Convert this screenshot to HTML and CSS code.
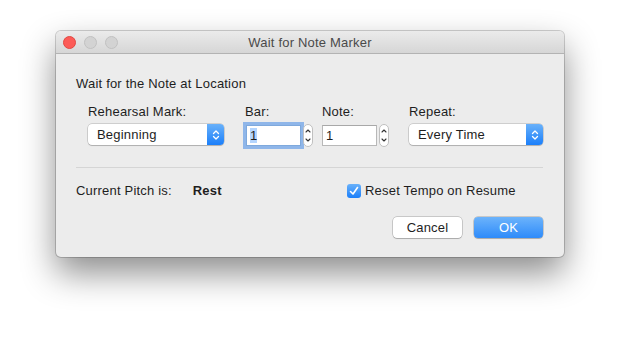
FILE: index.html
```html
<!DOCTYPE html>
<html lang="en">
<head>
    <meta charset="UTF-8">
    <meta name="viewport" content="width=device-width, initial-scale=1.0">
    <title>Wait for Note Marker</title>
    <link rel="stylesheet" href="styles.css">
</head>
<body>
    <div class="window">
        <div class="titlebar">
            <div class="lights">
                <span class="light close"></span>
                <span class="light"></span>
                <span class="light"></span>
            </div>
            <div class="title">Wait for Note Marker</div>
        </div>

        <div class="content">
            <div class="heading">Wait for the Note at Location</div>

            <div class="fields">
                <div class="field col-mark">
                    <label>Rehearsal Mark:</label>
                    <div class="popup popup-mark">
                        <span class="popup-text">Beginning</span>
                        <span class="popup-arrows">
                            <svg width="8" height="12" viewBox="0 0 8 12"><path d="M1.5 4.5 L4 2 L6.5 4.5 M1.5 7.5 L4 10 L6.5 7.5" fill="none" stroke="#fff" stroke-width="1.3" stroke-linecap="round" stroke-linejoin="round"/></svg>
                        </span>
                    </div>
                </div>

                <div class="field col-bar">
                    <label>Bar:</label>
                    <div class="number-row">
                        <div class="textbox focused"><span class="selected">1</span></div>
                        <div class="stepper">
                            <svg width="8" height="21" viewBox="0 0 8 21"><path d="M2 7 L4 5 L6 7 M2 14 L4 16 L6 14" fill="none" stroke="#333" stroke-width="1.1" stroke-linecap="round" stroke-linejoin="round"/></svg>
                        </div>
                    </div>
                </div>

                <div class="field col-note">
                    <label>Note:</label>
                    <div class="number-row">
                        <div class="textbox">1</div>
                        <div class="stepper">
                            <svg width="8" height="21" viewBox="0 0 8 21"><path d="M2 7 L4 5 L6 7 M2 14 L4 16 L6 14" fill="none" stroke="#333" stroke-width="1.1" stroke-linecap="round" stroke-linejoin="round"/></svg>
                        </div>
                    </div>
                </div>

                <div class="field col-repeat">
                    <label>Repeat:</label>
                    <div class="popup popup-repeat">
                        <span class="popup-text">Every Time</span>
                        <span class="popup-arrows">
                            <svg width="8" height="12" viewBox="0 0 8 12"><path d="M1.5 4.5 L4 2 L6.5 4.5 M1.5 7.5 L4 10 L6.5 7.5" fill="none" stroke="#fff" stroke-width="1.3" stroke-linecap="round" stroke-linejoin="round"/></svg>
                        </span>
                    </div>
                </div>
            </div>

            <div class="separator"></div>

            <div class="status-row">
                <div class="pitch">
                    <span class="pitch-label">Current Pitch is:</span>
                    <span class="pitch-value">Rest</span>
                </div>
                <div class="check">
                    <span class="checkbox">
                        <svg width="14" height="14" viewBox="0 0 14 14"><path d="M3.5 7.5 L6 10 L10.5 3.5" fill="none" stroke="#fff" stroke-width="1.6" stroke-linecap="round" stroke-linejoin="round"/></svg>
                    </span>
                    <span>Reset Tempo on Resume</span>
                </div>
            </div>

            <div class="buttons">
                <button class="btn">Cancel</button>
                <button class="btn btn-default">OK</button>
            </div>
        </div>
    </div>
</body>
</html>
```

FILE: styles.css
```css
html, body {
    height: 100%;
}

body {
    margin: 0;
    padding: 0;
    overflow: hidden;
    background: #ffffff;
    font-family: 'Liberation Sans', Arial, sans-serif;
    font-size: 13px;
    letter-spacing: 0.2px;
    color: #1e1e1e;
}

.window {
    margin: 31px 0 0 56px;
    width: 508px;
    height: 226px;
    border-radius: 5px;
    overflow: hidden;
    background: #ececec;
    box-shadow: 0 0 0 1px rgba(0, 0, 0, 0.18), 0 16px 34px rgba(0, 0, 0, 0.45);
}

.titlebar {
    height: 22px;
    display: flex;
    align-items: center;
    background: linear-gradient(#ebebeb, #d6d6d6);
    border-bottom: 1px solid #b3b3b3;
    position: relative;
}

.lights {
    display: flex;
    gap: 8px;
    padding-left: 7px;
}

.light {
    width: 11px;
    height: 11px;
    border-radius: 50%;
    background: #d3d3d3;
    border: 0.5px solid #c1c1c1;
}

.light.close {
    background: #fc5b57;
    border-color: #e14942;
}

.title {
    position: absolute;
    left: 0;
    right: 0;
    text-align: center;
    color: #4a4a4a;
    pointer-events: none;
}

.content {
    padding: 22px 21px 0 20px;
}

.heading {
    line-height: 16px;
}

.fields {
    display: flex;
    margin-top: 12px;
    padding-left: 12px;
}

.field label {
    display: block;
    line-height: 16px;
    margin-bottom: 4px;
}

.col-mark { width: 157px; }
.col-bar { width: 77px; }
.col-note { width: 87px; }
.col-repeat { width: 134px; }

.popup {
    height: 21px;
    display: flex;
    background: #ffffff;
    border-radius: 4px;
    box-shadow: 0 0 0 0.5px rgba(0, 0, 0, 0.25), 0 1px 1px rgba(0, 0, 0, 0.15);
    overflow: hidden;
}

.popup-mark { width: 136px; }
.popup-repeat { width: 134px; }

.popup-text {
    flex: 1;
    padding-left: 9px;
    line-height: 21px;
}

.popup-arrows {
    width: 17px;
    display: flex;
    align-items: center;
    justify-content: center;
    background: linear-gradient(#69b1fa, #1b7ffa);
}

.number-row {
    display: flex;
    align-items: center;
}

.textbox {
    width: 50px;
    height: 19px;
    line-height: 19px;
    padding-left: 3px;
    background: #ffffff;
    border: 1px solid #b8b8b8;
    border-top-color: #a8a8a8;
    box-sizing: content-box;
}

.col-bar .textbox {
    margin-left: 1px;
    border-color: #7fa9dc;
}

.focused {
    box-shadow: 0 0 0 3px rgba(104, 160, 232, 0.7);
}

.selected {
    background: #b4d5fe;
}

.stepper {
    width: 8px;
    height: 21px;
    margin-left: 2px;
    border-radius: 5px;
    background: #ffffff;
    border: 1px solid #c0c0c0;
}

.separator {
    height: 1px;
    background: #d5d5d5;
    margin-top: 20px;
}

.status-row {
    display: flex;
    margin-top: 15px;
    line-height: 16px;
}

.pitch {
    width: 271px;
}

.pitch-value {
    font-weight: bold;
    margin-left: 17px;
}

.check {
    display: flex;
    align-items: center;
    gap: 4px;
}

.checkbox {
    width: 14px;
    height: 14px;
    border-radius: 3px;
    background: linear-gradient(#69b1fa, #1b7ffa);
    display: flex;
}

.buttons {
    display: flex;
    justify-content: flex-end;
    gap: 12px;
    margin-top: 18px;
}

.btn {
    width: 69px;
    height: 21px;
    padding: 0;
    font-family: 'Liberation Sans', Arial, sans-serif;
    font-size: 13px;
    letter-spacing: 0.2px;
    color: #1e1e1e;
    background: #ffffff;
    border: none;
    border-radius: 4px;
    box-shadow: 0 0 0 0.5px rgba(0, 0, 0, 0.3), 0 1px 1px rgba(0, 0, 0, 0.15);
}

.btn-default {
    color: #ffffff;
    background: linear-gradient(#6cb3fb, #2e8bfa);
}
```
